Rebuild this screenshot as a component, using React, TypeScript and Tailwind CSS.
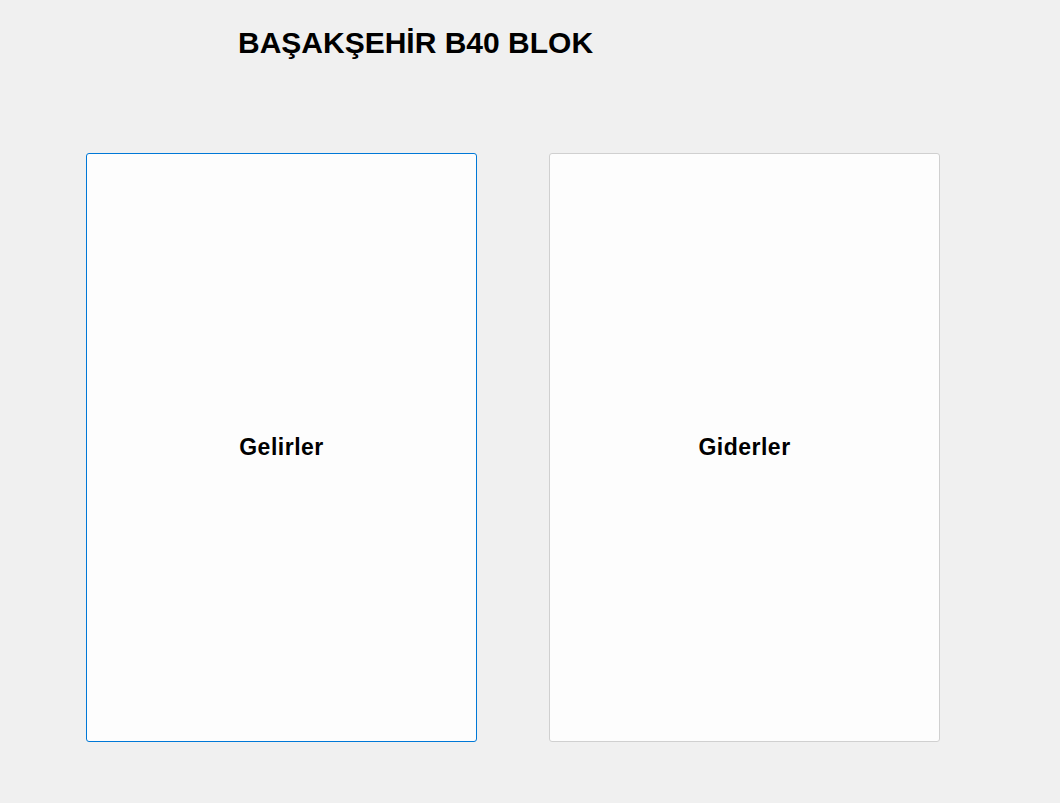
export default function App() {
  return (
    <div className="min-h-[803px] w-full bg-[#f0f0f0] font-['Liberation_Sans',Arial,sans-serif] text-black">
      <h1 className="pl-[238px] pt-[26px] text-[30px] font-bold leading-[34px]">BAŞAKŞEHİR B40 BLOK</h1>
      <div className="mt-[93px] flex gap-[72px] pl-[86px]">
        <button className="flex h-[589px] w-[391px] items-center justify-center rounded-[3px] border border-[#0078d7] bg-[#fdfdfd] text-[23px] font-bold tracking-[0.5px]">
          Gelirler
        </button>
        <button className="flex h-[589px] w-[391px] items-center justify-center rounded-[3px] border border-[#d0d0d0] bg-[#fdfdfd] text-[23px] font-bold tracking-[0.5px]">
          Giderler
        </button>
      </div>
    </div>
  );
}
